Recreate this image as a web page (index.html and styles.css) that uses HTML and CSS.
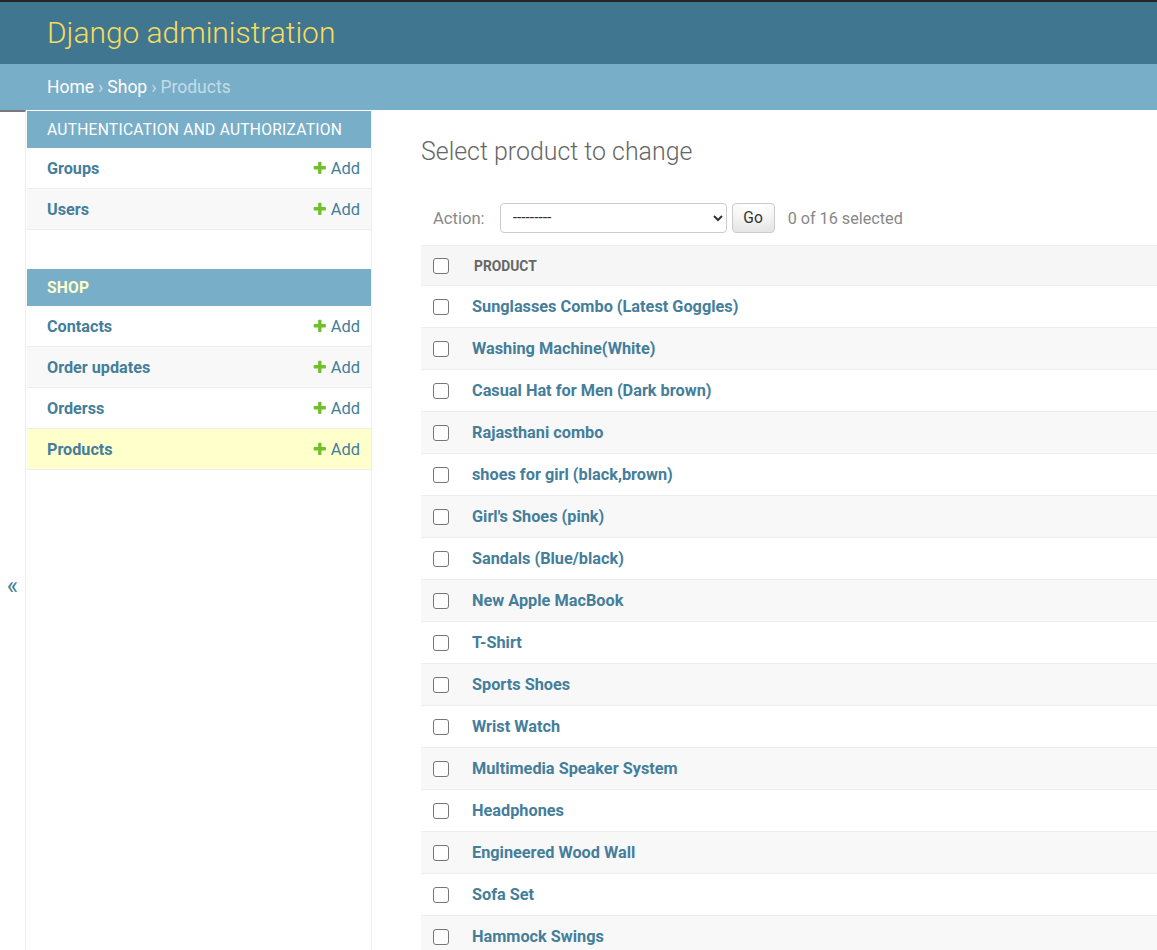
FILE: index.html
```html
<!DOCTYPE html>
<html lang="en">
<head>
<meta charset="utf-8">
<title>Select product to change | Django site admin</title>
<link rel="stylesheet" href="styles.css">
</head>
<body>
<header class="header">
  <h1 class="site-name"><a href="#">Django administration</a></h1>
</header>
<nav class="breadcrumbs">
  <a href="#">Home</a><span class="sep">›</span><a href="#">Shop</a><span class="sep">›</span><span class="current">Products</span>
</nav>
<div class="main">
  <button class="toggle" type="button" aria-label="Toggle navigation">«</button>
  <aside class="nav-sidebar">
    <section class="module">
      <div class="caption">Authentication and Authorization</div>
      <div class="model-row">
        <a class="model-name" href="#">Groups</a>
        <a class="addlink" href="#"><svg class="plus" viewBox="0 0 1792 1792"><path fill="#70bf2b" d="M1600 796v192q0 40-28 68t-68 28h-416v416q0 40-28 68t-68 28h-192q-40 0-68-28t-28-68v-416h-416q-40 0-68-28t-28-68v-192q0-40 28-68t68-28h416v-416q0-40 28-68t68-28h192q40 0 68 28t28 68v416h416q40 0 68 28t28 68z"/></svg>Add</a>
      </div>
      <div class="model-row alt">
        <a class="model-name" href="#">Users</a>
        <a class="addlink" href="#"><svg class="plus" viewBox="0 0 1792 1792"><path fill="#70bf2b" d="M1600 796v192q0 40-28 68t-68 28h-416v416q0 40-28 68t-68 28h-192q-40 0-68-28t-28-68v-416h-416q-40 0-68-28t-28-68v-192q0-40 28-68t68-28h416v-416q0-40 28-68t68-28h192q40 0 68 28t28 68v416h416q40 0 68 28t28 68z"/></svg>Add</a>
      </div>
    </section>
    <section class="module">
      <div class="caption current-app">Shop</div>
      <div class="model-row">
        <a class="model-name" href="#">Contacts</a>
        <a class="addlink" href="#"><svg class="plus" viewBox="0 0 1792 1792"><path fill="#70bf2b" d="M1600 796v192q0 40-28 68t-68 28h-416v416q0 40-28 68t-68 28h-192q-40 0-68-28t-28-68v-416h-416q-40 0-68-28t-28-68v-192q0-40 28-68t68-28h416v-416q0-40 28-68t68-28h192q40 0 68 28t28 68v416h416q40 0 68 28t28 68z"/></svg>Add</a>
      </div>
      <div class="model-row alt">
        <a class="model-name" href="#">Order updates</a>
        <a class="addlink" href="#"><svg class="plus" viewBox="0 0 1792 1792"><path fill="#70bf2b" d="M1600 796v192q0 40-28 68t-68 28h-416v416q0 40-28 68t-68 28h-192q-40 0-68-28t-28-68v-416h-416q-40 0-68-28t-28-68v-192q0-40 28-68t68-28h416v-416q0-40 28-68t68-28h192q40 0 68 28t28 68v416h416q40 0 68 28t28 68z"/></svg>Add</a>
      </div>
      <div class="model-row">
        <a class="model-name" href="#">Orderss</a>
        <a class="addlink" href="#"><svg class="plus" viewBox="0 0 1792 1792"><path fill="#70bf2b" d="M1600 796v192q0 40-28 68t-68 28h-416v416q0 40-28 68t-68 28h-192q-40 0-68-28t-28-68v-416h-416q-40 0-68-28t-28-68v-192q0-40 28-68t68-28h416v-416q0-40 28-68t68-28h192q40 0 68 28t28 68v416h416q40 0 68 28t28 68z"/></svg>Add</a>
      </div>
      <div class="model-row current-model">
        <a class="model-name" href="#">Products</a>
        <a class="addlink" href="#"><svg class="plus" viewBox="0 0 1792 1792"><path fill="#70bf2b" d="M1600 796v192q0 40-28 68t-68 28h-416v416q0 40-28 68t-68 28h-192q-40 0-68-28t-28-68v-416h-416q-40 0-68-28t-28-68v-192q0-40 28-68t68-28h416v-416q0-40 28-68t68-28h192q40 0 68 28t28 68v416h416q40 0 68 28t28 68z"/></svg>Add</a>
      </div>
    </section>
  </aside>
  <main class="content">
    <h1 class="title">Select product to change</h1>
    <div class="actions">
      <label class="action-label" for="action">Action:</label>
      <select id="action" class="action-select">
        <option>---------</option>
        <option>Delete selected products</option>
      </select>
      <button class="go-button" type="button">Go</button>
      <span class="action-counter">0 of 16 selected</span>
    </div>
    <table class="results">
      <thead>
        <tr>
          <th class="check-col"><input class="cb" type="checkbox"></th>
          <th class="head-col">Product</th>
        </tr>
      </thead>
      <tbody>
        <tr><td class="check-col"><input class="cb" type="checkbox"></td><th class="name-col"><a href="#">Sunglasses Combo (Latest Goggles)</a></th></tr>
        <tr class="alt"><td class="check-col"><input class="cb" type="checkbox"></td><th class="name-col"><a href="#">Washing Machine(White)</a></th></tr>
        <tr><td class="check-col"><input class="cb" type="checkbox"></td><th class="name-col"><a href="#">Casual Hat for Men (Dark brown)</a></th></tr>
        <tr class="alt"><td class="check-col"><input class="cb" type="checkbox"></td><th class="name-col"><a href="#">Rajasthani combo</a></th></tr>
        <tr><td class="check-col"><input class="cb" type="checkbox"></td><th class="name-col"><a href="#">shoes for girl (black,brown)</a></th></tr>
        <tr class="alt"><td class="check-col"><input class="cb" type="checkbox"></td><th class="name-col"><a href="#">Girl's Shoes (pink)</a></th></tr>
        <tr><td class="check-col"><input class="cb" type="checkbox"></td><th class="name-col"><a href="#">Sandals (Blue/black)</a></th></tr>
        <tr class="alt"><td class="check-col"><input class="cb" type="checkbox"></td><th class="name-col"><a href="#">New Apple MacBook</a></th></tr>
        <tr><td class="check-col"><input class="cb" type="checkbox"></td><th class="name-col"><a href="#">T-Shirt</a></th></tr>
        <tr class="alt"><td class="check-col"><input class="cb" type="checkbox"></td><th class="name-col"><a href="#">Sports Shoes</a></th></tr>
        <tr><td class="check-col"><input class="cb" type="checkbox"></td><th class="name-col"><a href="#">Wrist Watch</a></th></tr>
        <tr class="alt"><td class="check-col"><input class="cb" type="checkbox"></td><th class="name-col"><a href="#">Multimedia Speaker System</a></th></tr>
        <tr><td class="check-col"><input class="cb" type="checkbox"></td><th class="name-col"><a href="#">Headphones</a></th></tr>
        <tr class="alt"><td class="check-col"><input class="cb" type="checkbox"></td><th class="name-col"><a href="#">Engineered Wood Wall</a></th></tr>
        <tr><td class="check-col"><input class="cb" type="checkbox"></td><th class="name-col"><a href="#">Sofa Set</a></th></tr>
        <tr class="alt"><td class="check-col"><input class="cb" type="checkbox"></td><th class="name-col"><a href="#">Hammock Swings</a></th></tr>
      </tbody>
    </table>
    <p class="paginator">16 products</p>
  </main>
</div>
</body>
</html>
```

FILE: styles.css
```css
html, body {
  margin: 0;
  padding: 0;
}
body {
  font-family: Roboto, "Liberation Sans", Arial, sans-serif;
  font-size: 16.8px;
  color: #333;
  background: #fff;
  overflow: hidden;
}
a {
  text-decoration: none;
  color: #447e9b;
}

/* Header */
.header {
  border-top: 2px solid #262626;
  background: #417690;
  height: 62px;
  padding: 0 47px;
  display: flex;
  align-items: center;
}
.site-name {
  margin: 0;
  font-size: 29.9px;
  font-weight: 300;
  line-height: 1;
}
.site-name a {
  color: #f5dd5d;
}

/* Breadcrumbs */
.breadcrumbs {
  background: #79aec8;
  height: 46px;
  padding: 0 47px;
  display: flex;
  align-items: center;
  color: #c4dce8;
  font-size: 17.5px;
}
.breadcrumbs a {
  color: #fff;
}
.breadcrumbs .sep {
  margin: 0 4px;
}
.breadcrumbs .current {
  color: #c4dce8;
}

/* Main layout */
.main {
  display: flex;
  align-items: flex-start;
}
.toggle {
  flex: 0 0 26px;
  width: 26px;
  height: 950px;
  box-sizing: border-box;
  margin: 0;
  padding: 0 0 0 0;
  border: 0;
  border-top: 2px solid #7a7a7a;
  border-right: 1px solid #eee;
  background: #fff;
  color: #447e9b;
  font-family: Roboto, "Liberation Sans", Arial, sans-serif;
  font-size: 24px;
  display: flex;
  align-items: center;
  justify-content: center;
  cursor: pointer;
}

/* Sidebar */
.nav-sidebar {
  flex: 0 0 346px;
  width: 346px;
  box-sizing: border-box;
  min-height: 950px;
  padding: 1px 0 0 1px;
  border-right: 1px solid #eee;
}
.module {
  margin-bottom: 39px;
}
.caption {
  background: #79aec8;
  color: #fff;
  height: 37px;
  line-height: 38px;
  padding-left: 20px;
  font-size: 15.6px;
  font-weight: 400;
  letter-spacing: 0.25px;
  text-transform: uppercase;
}
.caption.current-app {
  color: #ffc;
  font-weight: 700;
}
.model-row {
  display: flex;
  align-items: center;
  justify-content: space-between;
  height: 40px;
  border-bottom: 1px solid #eee;
  padding: 0 11px 0 20px;
  background: #fff;
}
.model-row.alt {
  background: #f8f8f8;
}
.model-row.current-model {
  background: #ffc;
}
.model-name {
  font-weight: 700;
  font-size: 16.2px;
}
.addlink {
  display: flex;
  align-items: center;
  font-size: 16.5px;
  color: #447e9b;
}
.plus {
  width: 15.6px;
  height: 15.6px;
  margin-right: 3px;
}

/* Content */
.content {
  flex: 1;
  min-width: 0;
  padding: 27px 0 0 49px;
}
.title {
  margin: 0 0 25px;
  font-size: 24.9px;
  line-height: 29px;
  font-weight: 300;
  color: #666;
}
.actions {
  display: flex;
  align-items: center;
  height: 30px;
  padding: 12px;
  color: #888;
  font-size: 16.6px;
}
.action-label {
  margin-right: 15px;
}
.action-select {
  width: 227px;
  height: 30px;
  box-sizing: border-box;
  border: 1px solid #ccc;
  border-radius: 4px;
  background: #fff;
  color: #333;
  font-family: Roboto, "Liberation Sans", Arial, sans-serif;
  font-size: 15.6px;
  padding: 0 6px 0 8px;
}
.go-button {
  margin-left: 5px;
  width: 43px;
  height: 30px;
  box-sizing: border-box;
  border: 1px solid #ccc;
  border-radius: 4px;
  background: #fff;
  box-shadow: 0 -18px 24px -12px rgba(0, 0, 0, 0.15) inset;
  color: #333;
  font-family: Roboto, "Liberation Sans", Arial, sans-serif;
  font-size: 15.6px;
  padding: 0;
  cursor: pointer;
}
.action-counter {
  margin-left: 13px;
  font-size: 16.2px;
}

/* Results table */
.results {
  width: 100%;
  border-collapse: collapse;
}
.results thead th {
  background: #f6f6f6;
  border-top: 1px solid #eee;
  border-bottom: 1px solid #eee;
  height: 39px;
  padding: 0;
  text-align: left;
  vertical-align: middle;
}
.results thead th.head-col {
  padding-left: 25px;
  color: #666;
  font-size: 13.8px;
  font-weight: 700;
  text-transform: uppercase;
}
.results .check-col {
  width: 16px;
  padding: 0 0 0 12px;
  vertical-align: middle;
}
.results tbody td,
.results tbody th {
  height: 41px;
  border-bottom: 1px solid #eee;
  padding-top: 0;
  padding-bottom: 0;
  vertical-align: middle;
  text-align: left;
}
.results tbody tr {
  background: #fff;
}
.results tbody tr.alt {
  background: #f8f8f8;
}
.results .name-col {
  padding-left: 23px;
  font-weight: 700;
  font-size: 16.3px;
}
.cb {
  -webkit-appearance: none;
  appearance: none;
  display: block;
  width: 16px;
  height: 16px;
  margin: 0;
  box-sizing: border-box;
  border: 1px solid #767676;
  border-radius: 3px;
  background: #fff;
}
.paginator {
  margin: 0;
  padding: 12px;
  color: #666;
  font-size: 15.6px;
}
```
